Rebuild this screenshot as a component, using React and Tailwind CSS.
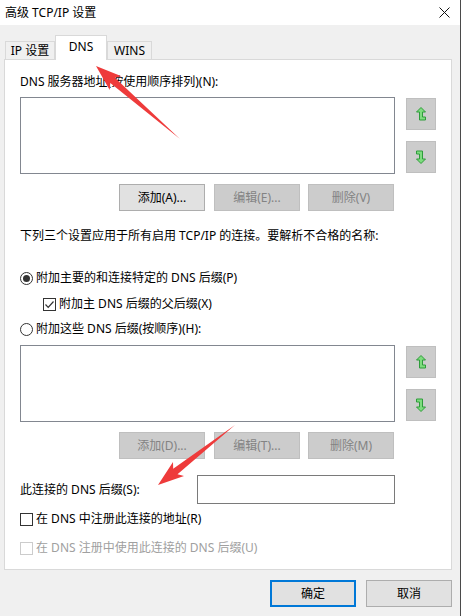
import React from 'react';

const font = { fontFamily: '"Noto Sans", "Noto Sans CJK SC", sans-serif' };

// green bent arrow used on the move up / move down buttons
function BentArrow({ down }) {
  return (
    <svg
      width="10"
      height="14"
      viewBox="0 0 10 14"
      className={down ? 'rotate-180' : ''}
    >
      <polygon
        points="5,0.5 9.5,5 6.5,5 6.5,10 9.5,10 9.5,13 3.5,13 3.5,5 0.5,5"
        fill="#7edc7e"
        stroke="#2e9c3b"
        strokeWidth="1"
        strokeLinejoin="miter"
      />
    </svg>
  );
}

function MoveButtons() {
  return (
    <div className="ml-[11px] mt-[1px] flex flex-col gap-[11px]">
      <div className="w-[30px] h-[32px] bg-[#cccccc] border border-[#bfbfbf] flex items-center justify-center">
        <BentArrow />
      </div>
      <div className="w-[30px] h-[32px] bg-[#cccccc] border border-[#bfbfbf] flex items-center justify-center">
        <BentArrow down />
      </div>
    </div>
  );
}

function Button({ children, disabled, className = '' }) {
  return (
    <div
      className={`w-[86px] h-[27px] flex items-center justify-center text-[12px] border ${
        disabled
          ? 'bg-[#cccccc] border-[#bfbfbf] text-[#838383]'
          : 'bg-[#e1e1e1] border-[#adadad] text-black'
      } ${className}`}
    >
      {children}
    </div>
  );
}

function Radio({ checked }) {
  return (
    <div className="w-[13px] h-[13px] rounded-full border border-[#333333] bg-white flex items-center justify-center shrink-0">
      {checked && <div className="w-[7px] h-[7px] rounded-full bg-[#333333]" />}
    </div>
  );
}

function Checkbox({ checked, disabled }) {
  return (
    <div
      className={`w-[13px] h-[13px] border bg-white flex items-center justify-center shrink-0 ${
        disabled ? 'border-[#cccccc]' : 'border-[#333333]'
      }`}
    >
      {checked && (
        <svg width="11" height="11" viewBox="0 0 11 11">
          <polyline points="1.5,5.5 4.2,8.3 9.5,2.5" fill="none" stroke="#333" strokeWidth="1.2" />
        </svg>
      )}
    </div>
  );
}

function Tab({ children, active }) {
  if (active) {
    return (
      <div className="relative z-10 -mb-px w-[52px] h-[25px] bg-white border border-b-0 border-[#d9d9d9] flex justify-center pt-[3px] text-[12px] leading-[16px]">
        {children}
      </div>
    );
  }
  return (
    <div className="h-[18px] bg-[#f0f0f0] border border-b-0 border-[#d9d9d9] flex items-center justify-center text-[12px] leading-[16px] -mx-px first:mx-0">
      {children}
    </div>
  );
}

export default function App() {
  return (
    <div
      className="relative w-[461px] h-[616px] flex flex-col bg-[#f0f0f0] border-r border-[#4a4a4a] text-black overflow-hidden"
      style={font}
    >
      {/* Title bar */}
      <div className="h-[25px] bg-white flex items-center justify-between pl-[5px] pr-[10px] shrink-0">
        <span className="text-[12px] leading-[16px]">高级 TCP/IP 设置</span>
        <svg width="11" height="11" viewBox="0 0 11 11">
          <path d="M0.5 0.5 L10.5 10.5 M10.5 0.5 L0.5 10.5" stroke="#111" strokeWidth="1" />
        </svg>
      </div>

      {/* Tabs */}
      <div className="pt-[10px] pl-[5px] flex items-end h-[34px] shrink-0">
        <div className="w-[50px]">
          <Tab>IP 设置</Tab>
        </div>
        <Tab active>DNS</Tab>
        <div className="w-[45px]">
          <Tab>WINS</Tab>
        </div>
      </div>

      {/* Panel */}
      <div className="ml-[4px] w-[448px] h-[511px] bg-white border border-[#d9d9d9] pl-[15px] text-[12px] leading-[16px] shrink-0">
        <div className="mt-[14px] h-[16px]">DNS 服务器地址(按使用顺序排列)(N):</div>

        <div className="mt-[7px] flex">
          <div className="w-[375px] h-[77px] border border-[#828790] bg-white" />
          <MoveButtons />
        </div>

        <div className="mt-[10px] pl-[99px] flex">
          <Button>添加(A)...</Button>
          <Button disabled className="ml-[9px]">编辑(E)...</Button>
          <Button disabled className="ml-[8px]">删除(V)</Button>
        </div>

        <div className="mt-[17px] h-[16px]">下列三个设置应用于所有启用 TCP/IP 的连接。要解析不合格的名称:</div>

        <div className="mt-[26px] h-[16px] flex items-center gap-[3px]">
          <Radio checked />
          <span>附加主要的和连接特定的 DNS 后缀(P)</span>
        </div>

        <div className="mt-[10px] h-[16px] pl-[23px] flex items-center gap-[3px]">
          <Checkbox checked />
          <span>附加主 DNS 后缀的父后缀(X)</span>
        </div>

        <div className="mt-[9px] h-[16px] flex items-center gap-[3px]">
          <Radio />
          <span>附加这些 DNS 后缀(按顺序)(H):</span>
        </div>

        <div className="mt-[8px] flex">
          <div className="w-[375px] h-[77px] border border-[#828790] bg-white" />
          <MoveButtons />
        </div>

        <div className="mt-[10px] pl-[99px] flex">
          <Button disabled>添加(D)...</Button>
          <Button disabled className="ml-[9px]">编辑(T)...</Button>
          <Button disabled className="ml-[8px]">删除(M)</Button>
        </div>

        <div className="mt-[16px] flex items-center">
          <span className="w-[177px]">此连接的 DNS 后缀(S):</span>
          <div className="w-[198px] h-[29px] border border-[#7a7a7a] bg-white" />
        </div>

        <div className="mt-[7px] h-[16px] flex items-center gap-[3px]">
          <Checkbox />
          <span>在 DNS 中注册此连接的地址(R)</span>
        </div>

        <div className="mt-[13px] h-[16px] flex items-center gap-[3px] text-[#a0a0a0]">
          <Checkbox disabled />
          <span>在 DNS 注册中使用此连接的 DNS 后缀(U)</span>
        </div>
      </div>

      {/* Dialog buttons */}
      <div className="mt-[10px] pr-[8px] flex justify-end gap-[10px]">
        <div className="w-[86px] h-[27px] flex items-center justify-center text-[12px] bg-[#e1e1e1] border-2 border-[#0078d7]">
          确定
        </div>
        <div className="w-[86px] h-[27px] flex items-center justify-center text-[12px] bg-[#e1e1e1] border border-[#adadad]">
          取消
        </div>
      </div>

      {/* Red annotation arrows drawn over the screenshot */}
      <svg
        className="absolute left-0 top-0 pointer-events-none"
        width="461"
        height="616"
        viewBox="0 0 461 616"
      >
        <polygon
          points="96,66 121.5,76.3 114.9,77.8 180,139 110.3,83 109.7,89.9"
          fill="#ee3b3b"
        />
        <polygon
          points="158,485 184,476.1 177.5,474.3 235,425 173.2,468.7 173,461.9"
          fill="#ee3b3b"
        />
      </svg>
    </div>
  );
}
